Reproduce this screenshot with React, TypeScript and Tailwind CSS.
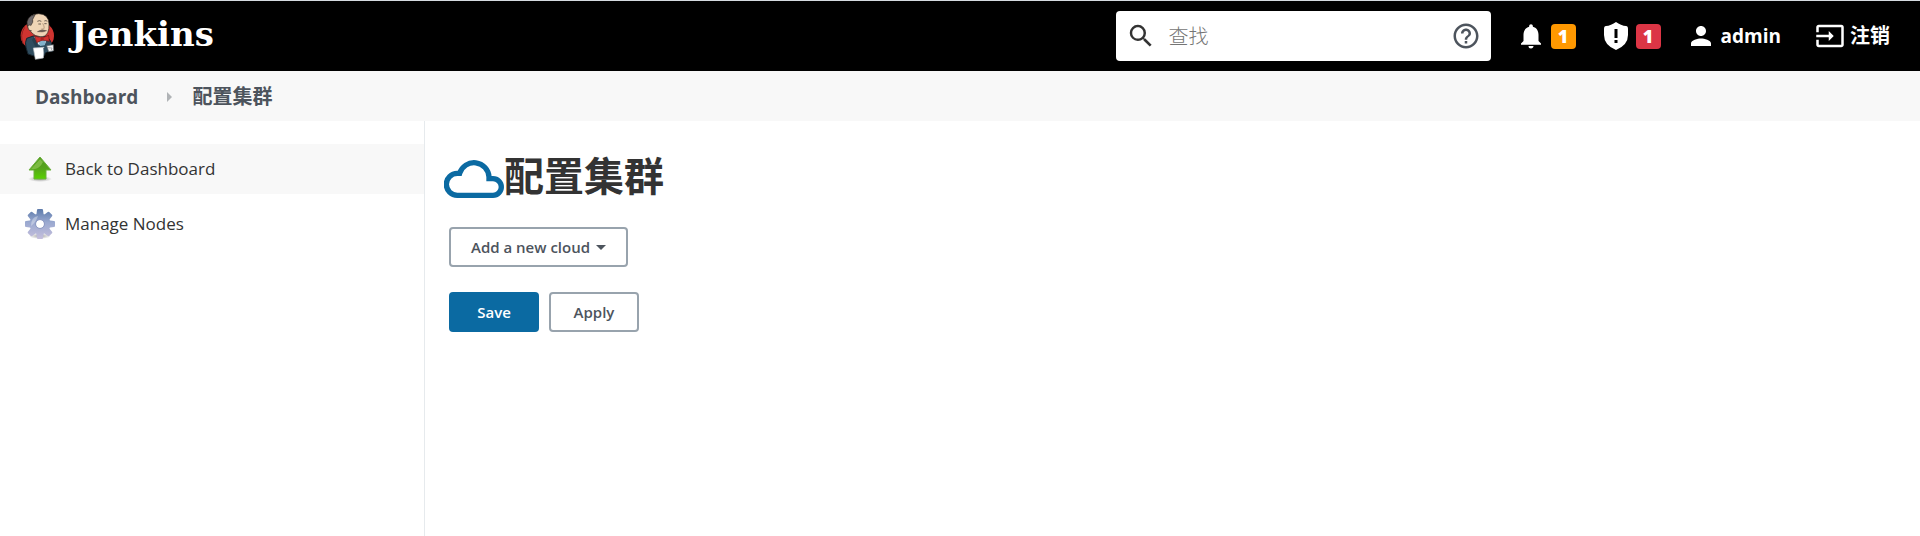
import { FC, ReactNode } from "react";
import { MdHelpOutline, MdInput, MdNotifications, MdPerson, MdSearch } from "react-icons/md";

const Butler: FC = () => (
  <svg viewBox="30 20 105 144" className="h-12 w-[35px] shrink-0" aria-hidden="true">
    <ellipse cx="82" cy="91" rx="50" ry="44" fill="#cf3430" />
    <path d="M40 116 Q28 90 44 66" fill="none" stroke="#8f2320" strokeWidth="3" />
    {/* coat */}
    <path
      d="M70 92 L50 99 Q44 112 48 126 L54 146 L72 152 L104 150 L106 140 L128 138 L124 112 Q120 98 104 94 Z"
      fill="#2f4c5e"
      stroke="#16252f"
      strokeWidth="3"
    />
    <path d="M72 94 L86 118 L104 118 L112 98 L92 94 Z" fill="#e8eef1" />
    <path d="M84 106 L108 104 L104 120 L90 122 Z" fill="#83b2cb" />
    <path d="M72 94 L84 122 L96 126 L80 132 L66 104 Z" fill="#263f4f" />
    {/* head */}
    <path
      d="M54 60 Q52 26 86 25 Q116 26 117 56 Q118 72 113 82 Q106 96 90 94 Q74 92 67 84 L60 76 Q54 70 54 60 Z"
      fill="#efd5b6"
      stroke="#2d2723"
      strokeWidth="2"
    />
    <path
      d="M60 64 L52 62 Q46 34 76 27 L68 42 Q70 52 64 58 Z"
      fill="#6f6a6c"
      stroke="#2d2723"
      strokeWidth="2"
    />
    <path
      d="M62 60 Q52 56 54 68 Q56 78 65 76"
      fill="#efd5b6"
      stroke="#2d2723"
      strokeWidth="2"
    />
    <g fill="none" stroke="#2d2723" strokeWidth="2">
      <path d="M82 48 Q88 44 94 48 M103 47 Q108 44 112 48" />
      <path d="M85 56 H93 M103 55 H110" />
    </g>
    <path d="M98 54 Q106 68 100 71 H94" fill="none" stroke="#9d7e62" strokeWidth="2" />
    <path d="M82 79 Q94 70 110 76 Q100 80 96 80 Z" fill="#75655b" stroke="#4c4038" />
    {/* bow tie */}
    <path
      d="M74 92 L96 98 L116 90 L118 108 L97 104 L80 112 Z"
      fill="#d4322f"
      stroke="#6d1513"
      strokeWidth="2"
    />
    <rect x="92" y="95" width="9" height="11" fill="#a82321" />
    {/* towel, hand and cup */}
    <path d="M70 128 L102 126 L100 158 L76 162 Z" fill="#fff" stroke="#b9c1c6" strokeWidth="2" />
    <path d="M100 128 H114 L112 140 L102 142 Z" fill="#2f4c5e" />
    <path d="M110 121 L130 118 L131 136 L116 139 Z" fill="#f4f4f4" stroke="#5a6268" strokeWidth="2" />
    <path d="M114 127 L126 128 L124 134" fill="none" stroke="#8b9196" strokeWidth="2" />
  </svg>
);

const CloudIcon: FC = () => (
  <svg viewBox="0 -17 180 132" className="h-11 w-[60px]" aria-hidden="true">
    <path
      d="M40 107 A33 33 0 0 1 40 41 H47 A45 45 0 0 1 135 52 V57 H147 A25 25 0 0 1 147 107 Z"
      fill="none"
      stroke="#0b6aa2"
      strokeWidth="16"
    />
  </svg>
);

const ShieldIcon: FC = () => (
  <svg viewBox="0 0 24 28" className="h-7 w-6" aria-hidden="true">
    <path
      d="M12 0 C9 2 5 4 2 4 Q0 4 0 7 V13 Q0 23 12 28 Q24 23 24 13 V7 Q24 4 22 4 C19 4 15 2 12 0 Z"
      fill="#fff"
    />
    <path d="M10.5 7 H13.5 V16 H10.5 Z M10.5 18 H13.5 V21 H10.5 Z" fill="#000" />
  </svg>
);

const UpArrow: FC = () => (
  <svg viewBox="0 0 32 32" className="size-8" aria-hidden="true">
    <defs>
      <linearGradient id="green" x1="0" y1="0" x2="0" y2="1">
        <stop offset="0" stopColor="#4f9a1c" />
        <stop offset="0.5" stopColor="#55a31c" />
        <stop offset="1" stopColor="#58d200" />
      </linearGradient>
      <radialGradient id="shade">
        <stop offset="0" stopColor="#a0a0a0" />
        <stop offset="1" stopColor="#a0a0a0" stopOpacity="0" />
      </radialGradient>
    </defs>
    <ellipse cx="16" cy="26" rx="12" ry="3" fill="url(#shade)" />
    <path
      d="M16 4 L27 17 H22 V26 H10 V17 H5 Z"
      fill="url(#green)"
      stroke="#6bb03c"
      strokeLinejoin="round"
    />
    <path d="M16 6 L7 16 H11 Q16 15 19 9 Z" fill="#a5d66a" opacity="0.5" />
  </svg>
);

const teeth = [0, 45, 90, 135, 180, 225, 270, 315];

const Gear: FC = () => (
  <svg viewBox="0 0 32 32" className="size-8" aria-hidden="true">
    <defs>
      <linearGradient id="steel" x1="0" y1="0" x2="0" y2="1">
        <stop offset="0" stopColor="#5877a8" />
        <stop offset="0.45" stopColor="#9aa9d0" />
        <stop offset="1" stopColor="#c8c0dd" />
      </linearGradient>
      <mask id="gear">
        <g fill="#fff">
          {teeth.map((angle) => (
            <path
              key={angle}
              d="M11 9 Q13 6 13 2 Q13 1 14 1 H18 Q19 1 19 2 Q19 6 21 9 Z"
              transform={`rotate(${angle} 16 16)`}
            />
          ))}
          <circle cx="16" cy="16" r="10" />
        </g>
        <circle cx="16" cy="16" r="4" fill="#000" />
      </mask>
    </defs>
    <ellipse cx="16" cy="28" rx="11" ry="3" fill="url(#shade)" />
    <circle cx="16" cy="16" r="4" fill="#fff" />
    <rect width="32" height="32" fill="url(#steel)" mask="url(#gear)" />
    <path d="M7 18 Q7 9 14 8 Q12 14 7 18 Z" fill="#fff" opacity="0.35" />
    <circle cx="16" cy="16" r="4.5" fill="none" stroke="#8f9bc4" />
  </svg>
);

const Badge: FC<{ className: string; children: ReactNode }> = ({ className, children }) => (
  <span
    className={`flex size-[25px] items-center justify-center rounded text-lg font-extrabold ${className}`}
  >
    {children}
  </span>
);

const App: FC = () => {
  return (
    <div className="flex min-h-screen flex-col bg-white font-['Open_Sans','Noto_Sans_CJK_SC',sans-serif] text-[#333]">
      <header className="flex h-[71px] items-center justify-between border-t border-[#d5dbe0] bg-black pr-[30px] pl-5 text-white">
        <a href="#" className="flex items-center gap-4">
          <Butler />
          <span className="pb-1 font-['DejaVu_Serif',serif] text-[34px] leading-10 font-bold">
            Jenkins
          </span>
        </a>

        <div className="flex items-center text-xl font-bold">
          <form className="mr-[25px] flex h-[50px] w-[375px] items-center rounded bg-white px-[10px]">
            <MdSearch className="size-[30px] shrink-0 text-[#333]" />
            <input
              type="text"
              aria-label="查找"
              placeholder="查找"
              className="ml-[13px] min-w-0 flex-1 font-['Noto_Sans_CJK_SC',sans-serif] text-xl font-light text-[#333] outline-none placeholder:text-[#757575]"
            />
            <a href="#" aria-label="Help">
              <MdHelpOutline className="size-[30px] text-[#4d545d]" />
            </a>
          </form>
          <button className="mr-7 flex items-center gap-[5px]">
            <MdNotifications className="size-[30px]" />
            <Badge className="bg-[#ff9800]">1</Badge>
          </button>
          <button className="mr-[25px] flex items-center gap-2">
            <ShieldIcon />
            <Badge className="bg-[#dc3545]">1</Badge>
          </button>
          <a href="#" className="mr-[34px] flex items-center gap-[5px]">
            <MdPerson className="size-[30px]" />
            <span className="text-[19px]">admin</span>
          </a>
          <a href="#" className="flex items-center gap-[5px]">
            <MdInput className="size-[30px]" />
            <span>注销</span>
          </a>
        </div>
      </header>

      <nav className="flex h-[50px] items-center bg-[#f8f8f8] px-[35px] pt-0.5 text-xl font-bold text-[#4d545d]">
        <a href="#" className="text-[19px]">
          Dashboard
        </a>
        <svg viewBox="0 0 5 10" className="mr-5 ml-[29px] h-[10px] w-[5px]" aria-hidden="true">
          <path d="M0 0 L5 5 L0 10 Z" fill="#b0b3b6" />
        </svg>
        <a href="#">配置集群</a>
      </nav>

      <div className="flex flex-1">
        <aside className="w-[425px] shrink-0 border-r border-[#e6eaed] pt-[23px] text-[17px]">
          <a href="#" className="mb-[5px] flex h-[50px] items-center gap-[9px] bg-[#f8f8f8] pl-6">
            <UpArrow />
            Back to Dashboard
          </a>
          <a href="#" className="flex h-[50px] items-center gap-[9px] pl-6">
            <Gear />
            Manage Nodes
          </a>
        </aside>

        <main className="flex-1 pt-[25px] pl-6 text-[#4d545d]">
          <h1 className="mb-[21px] -ml-[5px] flex h-[60px] items-center text-[40px] leading-[60px] font-bold text-[#333]">
            <CloudIcon />
            配置集群
          </h1>
          <button className="mb-[25px] flex h-10 items-center gap-[6px] rounded border-2 border-[#98a3ad] px-5 text-[15px] font-semibold">
            Add a new cloud
            <svg viewBox="0 0 10 5" className="h-[5px] w-[10px]" aria-hidden="true">
              <path d="M0 0 H10 L5 5 Z" fill="#4d545d" />
            </svg>
          </button>
          <div className="flex gap-[10px]">
            <button className="h-10 w-[90px] rounded bg-[#0b6aa2] text-[15px] font-semibold text-white">
              Save
            </button>
            <button className="h-10 w-[90px] rounded border-2 border-[#98a3ad] text-[15px] font-semibold">
              Apply
            </button>
          </div>
        </main>
      </div>
    </div>
  );
};

export default App;
